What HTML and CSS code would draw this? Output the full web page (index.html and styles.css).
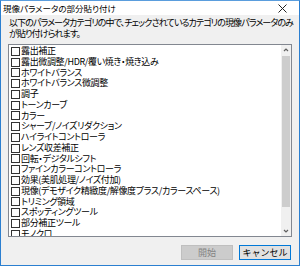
FILE: index.html
```html
<!DOCTYPE html>
<html>

<head>
    <title>現像パラメータの部分貼り付け</title>
    <link rel="stylesheet" href="styles.css">
</head>

<body>
    <div class="window">
        <div class="titlebar">
            <span class="title">現像パラメータの部分貼り付け</span>
            <svg class="close" width="9" height="9" viewBox="0 0 9 9">
                <path d="M0.5 0.5 L8.5 8.5 M8.5 0.5 L0.5 8.5" stroke="#222" stroke-width="1" fill="none" />
            </svg>
        </div>

        <div class="content">
            <p class="desc">以下のパラメータカテゴリの中で、チェックされているカテゴリの現像パラメータのみ<br>が貼り付けられます。</p>

            <div class="listbox">
                <ul class="items">
                    <li><span class="check"></span>露出補正</li>
                    <li><span class="check"></span>露出微調整/HDR/覆い焼き・焼き込み</li>
                    <li><span class="check"></span>ホワイトバランス</li>
                    <li><span class="check"></span>ホワイトバランス微調整</li>
                    <li><span class="check"></span>調子</li>
                    <li><span class="check"></span>トーンカーブ</li>
                    <li><span class="check"></span>カラー</li>
                    <li><span class="check"></span>シャープ/ノイズリダクション</li>
                    <li><span class="check"></span>ハイライトコントローラ</li>
                    <li><span class="check"></span>レンズ収差補正</li>
                    <li><span class="check"></span>回転・デジタルシフト</li>
                    <li><span class="check"></span>ファインカラーコントローラ</li>
                    <li><span class="check"></span>効果(美肌処理/ノイズ付加)</li>
                    <li><span class="check"></span>現像(デモザイク精緻度/解像度プラス/カラースペース)</li>
                    <li><span class="check"></span>トリミング領域</li>
                    <li><span class="check"></span>スポッティングツール</li>
                    <li><span class="check"></span>部分補正ツール</li>
                    <li><span class="check"></span>モノクロ</li>
                </ul>
                <div class="scrollbar">
                    <svg class="arrow" width="10" height="10" viewBox="0 0 10 10">
                        <path d="M3 6 L5 4 L7 6" stroke="#606060" stroke-width="1.2" fill="none" />
                    </svg>
                    <div class="track">
                        <div class="thumb"></div>
                    </div>
                    <svg class="arrow" width="10" height="10" viewBox="0 0 10 10">
                        <path d="M3 4 L5 6 L7 4" stroke="#606060" stroke-width="1.2" fill="none" />
                    </svg>
                </div>
            </div>

            <div class="buttons">
                <button class="btn" disabled>開始</button>
                <button class="btn default">キャンセル</button>
            </div>
        </div>
    </div>
</body>

</html>
```

FILE: styles.css
```css
body {
    margin: 0;
    font-family: "Noto Sans CJK JP", "Noto Sans", sans-serif;
    font-feature-settings: "palt";
    color: #000;
}

.window {
    width: 300px;
    height: 266px;
    box-sizing: border-box;
    border: 1px solid #2b7fd0;
    border-top-color: #5a9ddd;
    background-color: #f0f0f0;
    display: flex;
    flex-direction: column;
}

.titlebar {
    height: 14px;
    background-color: #fff;
    display: flex;
    align-items: center;
    justify-content: space-between;
    padding: 0 12px 0 2px;
    flex-shrink: 0;
}

.title {
    font-size: 8.5px;
    line-height: 14px;
}

.close {
    display: block;
}

.content {
    flex: 1;
    display: flex;
    flex-direction: column;
    padding: 3px 7px 0 7px;
    min-height: 0;
}

.desc {
    margin: 0 0 0 1px;
    font-size: 9px;
    line-height: 10.5px;
    letter-spacing: -0.9px;
    white-space: nowrap;
}

.listbox {
    margin-top: 5px;
    height: 193px;
    box-sizing: border-box;
    border: 1px solid #828790;
    background-color: #fff;
    display: flex;
    overflow: hidden;
}

.items {
    list-style: none;
    margin: 0;
    padding: 1px 0 0 2px;
    flex: 1;
    overflow: hidden;
}

.items li {
    display: flex;
    align-items: center;
    height: 10.75px;
    line-height: 10.75px;
    font-size: 9px;
    letter-spacing: -0.35px;
    white-space: nowrap;
}

.check {
    width: 7px;
    height: 7px;
    border: 1px solid #333;
    background-color: #fff;
    margin-right: 1px;
    flex-shrink: 0;
}

.scrollbar {
    width: 10px;
    background-color: #f0f0f0;
    display: flex;
    flex-direction: column;
    flex-shrink: 0;
}

.arrow {
    display: block;
    flex-shrink: 0;
}

.track {
    flex: 1;
    padding: 1px 1px 0 1px;
}

.thumb {
    height: 151px;
    background-color: #cdcdcd;
}

.buttons {
    display: flex;
    justify-content: flex-end;
    gap: 6px;
    margin-top: 8px;
    padding-right: 1px;
}

.btn {
    width: 52px;
    height: 15px;
    padding: 0;
    font-family: inherit;
    font-size: 9px;
    line-height: 13px;
    background-color: #e1e1e1;
    border: 1px solid #adadad;
    color: #000;
}

.btn:disabled {
    background-color: #cccccc;
    border-color: #bfbfbf;
    color: #838383;
}

.btn.default {
    border-color: #0078d7;
}
```
